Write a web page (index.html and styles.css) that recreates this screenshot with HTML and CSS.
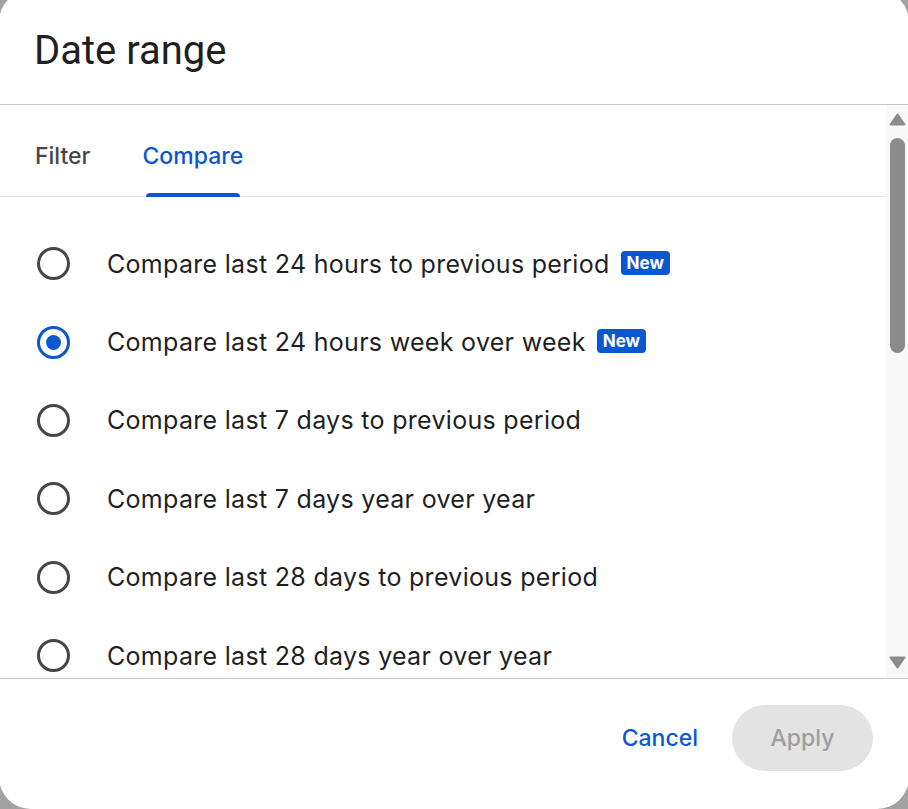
FILE: index.html
```html
<!DOCTYPE html>
<html>
<head>
<meta charset="utf-8">
<link rel="stylesheet" href="styles.css">
</head>
<body>
<div class="dialog">
  <div class="header"><h1 class="title">Date range</h1></div>
  <div class="main">
    <div class="content">
      <div class="tabs">
        <div class="tab">Filter</div>
        <div class="tab active">Compare</div>
      </div>
      <div class="options">
        <div class="option"><span class="radio"></span><span class="label">Compare last 24 hours to previous period</span><span class="badge">New</span></div>
        <div class="option"><span class="radio checked"></span><span class="label">Compare last 24 hours week over week</span><span class="badge">New</span></div>
        <div class="option"><span class="radio"></span><span class="label">Compare last 7 days to previous period</span></div>
        <div class="option"><span class="radio"></span><span class="label">Compare last 7 days year over year</span></div>
        <div class="option"><span class="radio"></span><span class="label">Compare last 28 days to previous period</span></div>
        <div class="option"><span class="radio"></span><span class="label">Compare last 28 days year over year</span></div>
      </div>
    </div>
    <div class="scrollbar">
      <svg class="arrow" width="17" height="13" viewBox="0 0 17 13"><path d="M8.5 1.5 L15.5 11.5 L1.5 11.5 Z" fill="#8b8b8b" stroke="#8b8b8b" stroke-width="2" stroke-linejoin="round"/></svg>
      <div class="track"><div class="thumb"></div></div>
      <svg class="arrow" width="17" height="13" viewBox="0 0 17 13"><path d="M1.5 1.5 L15.5 1.5 L8.5 11.5 Z" fill="#8b8b8b" stroke="#8b8b8b" stroke-width="2" stroke-linejoin="round"/></svg>
    </div>
  </div>
  <div class="footer">
    <button class="btn text">Cancel</button>
    <button class="btn filled" disabled>Apply</button>
  </div>
</div>
</body>
</html>
```

FILE: styles.css
```css
html, body {
  margin: 0;
  padding: 0;
  height: 100%;
  overflow: hidden;
}
body {
  background: #a2a2a2;
  font-family: "Inter", "Roboto", sans-serif;
}
.dialog {
  width: 910px;
  height: 819px;
  margin: -10px 0 0 -1px;
  background: #ffffff;
  border-radius: 32px;
  display: flex;
  flex-direction: column;
  overflow: hidden;
}
.header {
  height: 115px;
  box-sizing: border-box;
  padding: 37px 0 0 35px;
  border-bottom: 1px solid #c7c7c7;
  flex: none;
}
.title {
  margin: 0;
  font-family: "Roboto", "Inter", sans-serif;
  font-size: 40px;
  line-height: 48px;
  font-weight: 400;
  color: #1f1f1f;
}
.main {
  height: 573px;
  flex: none;
  display: flex;
  border-bottom: 1px solid #c7c7c7;
}
.content {
  flex: 1;
  overflow: hidden;
}
.tabs {
  height: 92px;
  box-sizing: border-box;
  border-bottom: 1px solid #e3e3e3;
  display: flex;
  gap: 52px;
  padding-left: 36px;
}
.tab {
  position: relative;
  padding-top: 37px;
  font-size: 23px;
  line-height: 28px;
  font-weight: 500;
  color: #444746;
}
.tab.active {
  color: #0b57d0;
}
.tab.active::after {
  content: "";
  position: absolute;
  left: 3px;
  right: 3px;
  bottom: -1px;
  height: 4px;
  background: #0b57d0;
  border-radius: 4px 4px 0 0;
}
.options {
  padding-top: 27.5px;
}
.option {
  height: 78.4px;
  display: flex;
  align-items: center;
  padding-left: 38px;
}
.radio {
  width: 33px;
  height: 33px;
  box-sizing: border-box;
  border: 3px solid #444746;
  border-radius: 50%;
  flex: none;
  margin-right: 37px;
  display: flex;
  align-items: center;
  justify-content: center;
}
.radio.checked {
  border-color: #0b57d0;
}
.radio.checked::after {
  content: "";
  width: 15px;
  height: 15px;
  border-radius: 50%;
  background: #0b57d0;
}
.label {
  font-size: 25px;
  line-height: 32px;
  letter-spacing: 0.3px;
  color: #1f1f1f;
  white-space: nowrap;
}
.badge {
  margin-left: 11px;
  height: 24px;
  padding: 0 6px;
  border-radius: 4px;
  background: #0b57d0;
  color: #ffffff;
  font-size: 17px;
  font-weight: 700;
  line-height: 24px;
  position: relative;
  top: -1px;
}
.scrollbar {
  width: 23px;
  flex: none;
  background: #f9f9f9;
  display: flex;
  flex-direction: column;
  align-items: center;
  padding: 8px 0 9px;
  box-sizing: border-box;
}
.arrow {
  flex: none;
  display: block;
  margin-right: 1px;
}
.track {
  flex: 1;
  width: 100%;
  display: flex;
  justify-content: center;
  padding-top: 12px;
}
.thumb {
  width: 15px;
  height: 215px;
  border-radius: 8px;
  background: #8b8b8b;
  margin-right: 1px;
}
.footer {
  flex: 1;
  display: flex;
  justify-content: flex-end;
  align-items: flex-start;
  padding: 26px 36px 0 0;
  gap: 12px;
}
.btn {
  border: none;
  font-family: inherit;
  font-size: 23px;
  font-weight: 500;
  height: 66px;
  border-radius: 33px;
  cursor: pointer;
}
.btn.text {
  background: transparent;
  color: #0b57d0;
  padding: 0 22px;
}
.btn.filled {
  background: #e3e3e3;
  color: #9e9e9e;
  width: 141px;
  padding: 0;
}
```
